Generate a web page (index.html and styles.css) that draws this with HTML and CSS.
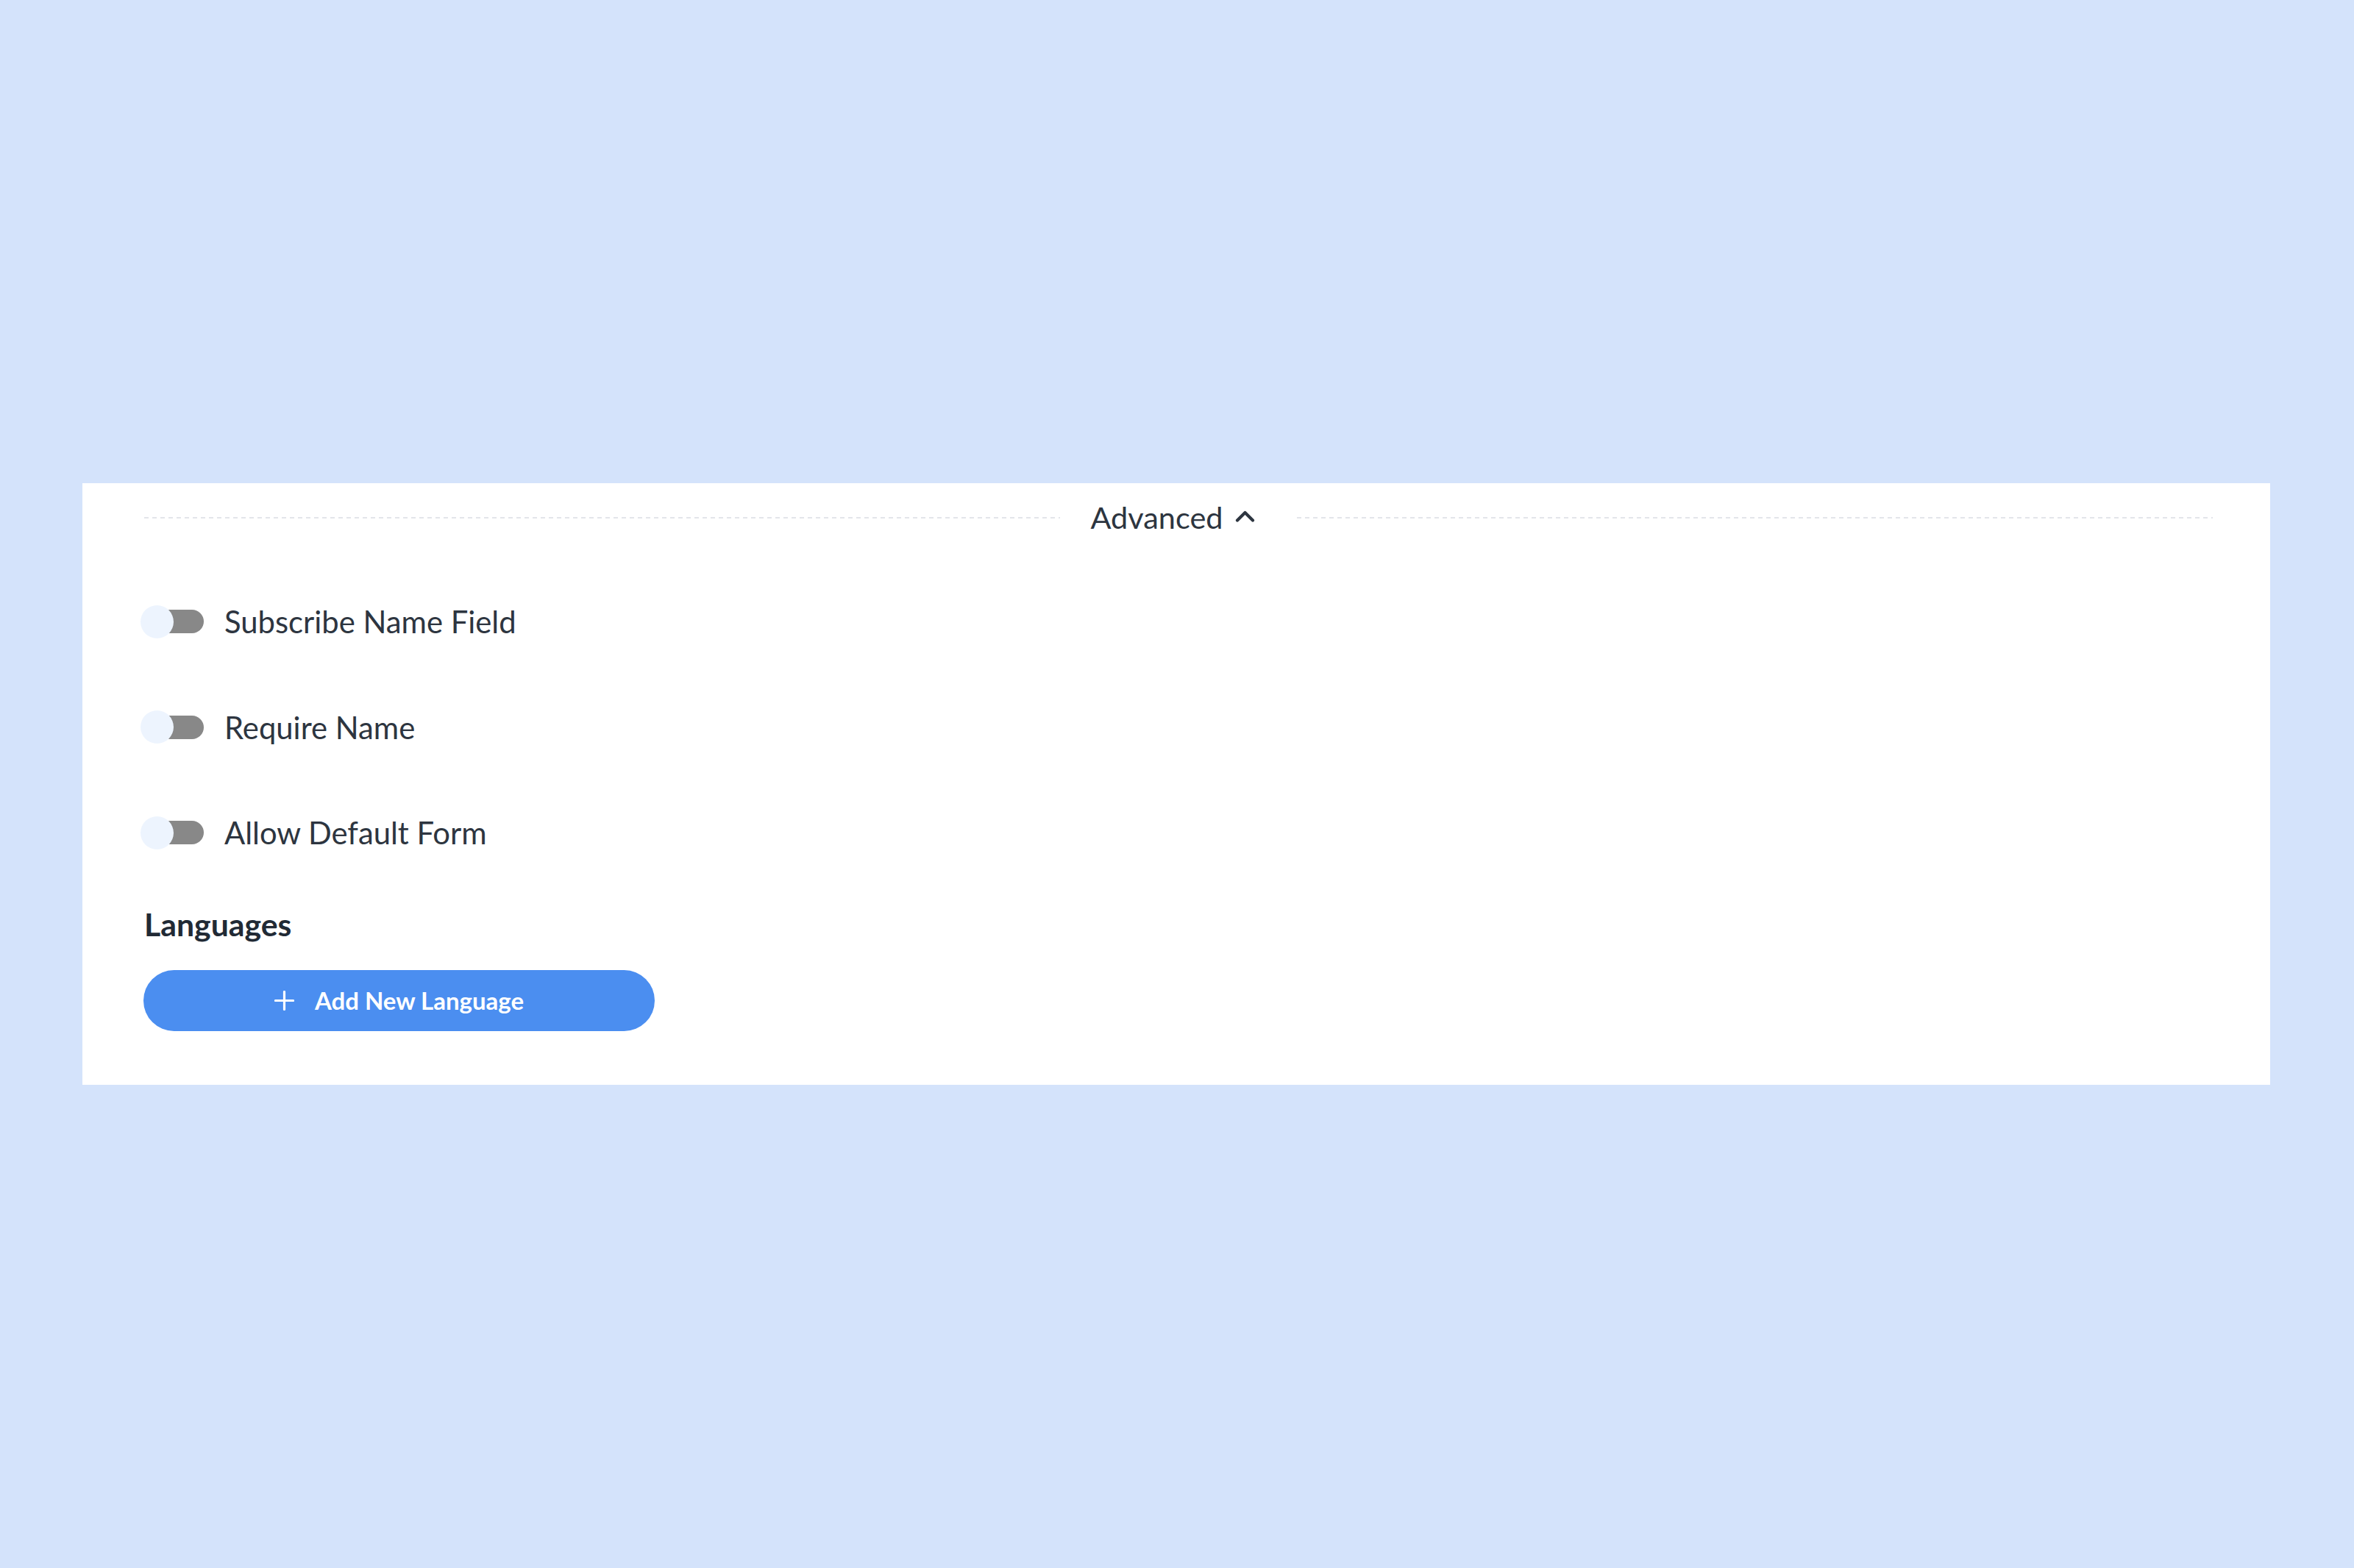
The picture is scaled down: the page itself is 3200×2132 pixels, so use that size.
FILE: index.html
```html
<!DOCTYPE html>
<html lang="en">
<head>
<meta charset="utf-8">
<title>Advanced settings</title>
<link rel="stylesheet" href="styles.css">
</head>
<body>
<div class="page">
  <section class="panel">
    <div class="divider">
      <span class="divider-line"></span>
      <button class="divider-label" type="button">
        <span class="divider-text">Advanced</span>
        <svg class="chevron" width="27" height="16" viewBox="0 0 27 16" aria-hidden="true">
          <polyline points="3,13.5 13.5,3 24,13.5" fill="none" stroke="#2d3540" stroke-width="4.2" stroke-linecap="round" stroke-linejoin="round"/>
        </svg>
      </button>
      <span class="divider-line"></span>
    </div>

    <div class="options">
      <label class="option">
        <span class="toggle"><span class="track"></span><span class="knob"></span></span>
        <span class="option-text">Subscribe Name Field</span>
      </label>
      <label class="option">
        <span class="toggle"><span class="track"></span><span class="knob"></span></span>
        <span class="option-text">Require Name</span>
      </label>
      <label class="option">
        <span class="toggle"><span class="track"></span><span class="knob"></span></span>
        <span class="option-text">Allow Default Form</span>
      </label>
    </div>

    <h3 class="section-title">Languages</h3>
    <button class="add-btn" type="button">
      <svg class="plus" width="27" height="27" viewBox="0 0 27 27" aria-hidden="true">
        <path d="M13.5 1.5V25.5M1.5 13.5H25.5" fill="none" stroke="#ffffff" stroke-width="3.2" stroke-linecap="round"/>
      </svg>
      <span>Add New Language</span>
    </button>
  </section>
</div>
</body>
</html>
```

FILE: styles.css
```css
html, body {
  margin: 0;
  padding: 0;
  background: #d4e3fb;
}

body {
  font-family: Lato, "Open Sans", "Liberation Sans", sans-serif;
  color: #2d3540;
}

.page {
  padding: 657px 114px 0 112px;
  min-height: 2132px;
  box-sizing: border-box;
}

.panel {
  background: #ffffff;
  height: 818px;
  box-sizing: border-box;
  padding: 22px 78px 0 84px;
}

.divider {
  display: flex;
  align-items: center;
  height: 48px;
}

.divider-line {
  flex: 1;
  height: 2px;
  margin-top: 2px;
  background: repeating-linear-gradient(to right, #e3e5ea 0, #e3e5ea 6px, transparent 6px, transparent 11px);
}

.divider-label {
  display: flex;
  align-items: center;
  padding: 0 57px 0 41px;
  border: 0;
  background: none;
  font: inherit;
  color: inherit;
  cursor: pointer;
}

.divider-text {
  font-size: 41.5px;
  line-height: 48px;
  color: #2d3540;
}

.chevron {
  margin-left: 16px;
  margin-top: -3px;
  display: block;
}

.options {
  display: flex;
  flex-direction: column;
  gap: 95.5px;
  margin-top: 94px;
}

.option {
  display: flex;
  align-items: center;
  height: 48px;
  cursor: pointer;
}

.toggle {
  position: relative;
  display: flex;
  align-items: center;
  width: 86px;
  height: 46px;
  margin-left: -5px;
  flex: none;
}

.track {
  margin-left: 14px;
  width: 72px;
  height: 32px;
  border-radius: 16px;
  background: #888888;
}

.knob {
  position: absolute;
  left: 0;
  top: 0.5px;
  width: 45px;
  height: 45px;
  border-radius: 50%;
  background: #edf4fe;
}

.option-text {
  margin-left: 28px;
  font-size: 41.8px;
  line-height: 48px;
  color: #2d3540;
}

.section-title {
  margin: 77px 0 0 0;
  font-size: 42.8px;
  line-height: 48px;
  font-weight: 700;
  color: #212a35;
}

.add-btn {
  margin: 37.5px 0 0 -1px;
  width: 695px;
  height: 83px;
  border: 0;
  border-radius: 42px;
  background: #4b8ef0;
  color: #ffffff;
  font-family: inherit;
  font-size: 33px;
  font-weight: 700;
  display: flex;
  align-items: center;
  justify-content: center;
  gap: 28px;
  cursor: pointer;
}

.plus {
  display: block;
}
```
